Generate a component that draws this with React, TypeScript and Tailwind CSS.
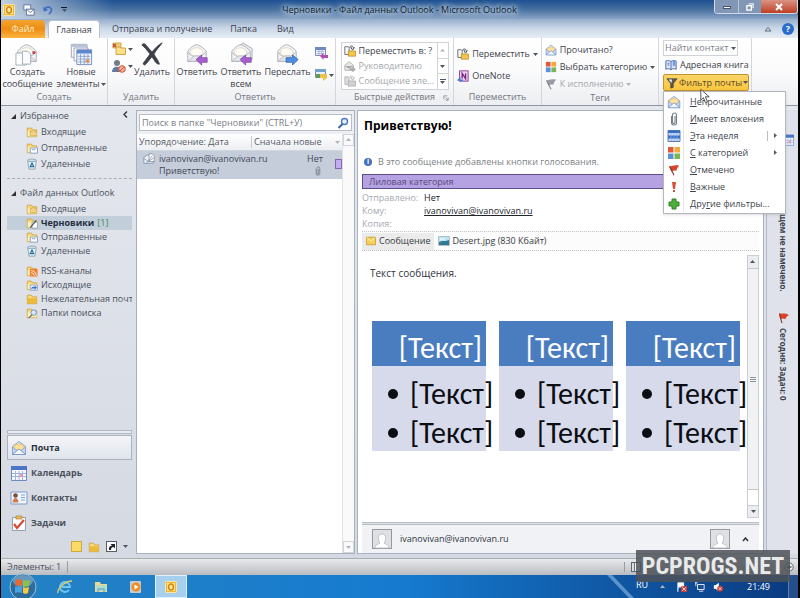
import type { ReactNode } from "react";

type IconProps = { className?: string };

function OutlookIcon({ className = "h-3 w-3" }: IconProps) {
  return (
    <svg viewBox="0 0 12 12" className={className} aria-hidden="true">
      <rect x="0.5" y="0.5" width="11" height="11" rx="1" fill="#f4b52a" stroke="#fbe6a6" />
      <rect x="2" y="2" width="8" height="8" fill="#fde9a8" />
      <ellipse cx="6" cy="6" rx="2.4" ry="3" fill="none" stroke="#d98407" strokeWidth="1.5" />
    </svg>
  );
}

function Envelope({ className = "h-4 w-4" }: IconProps) {
  return (
    <svg viewBox="0 0 16 16" className={className} aria-hidden="true">
      <path d="M1.5 6.5 8 1.5l6.5 5v8h-13z" fill="#dfeafb" stroke="#8aa3cc" />
      <path d="M3 7c0-4 10-4 10 0v3H3z" fill="#fbdf9a" stroke="#e3b75a" strokeWidth=".7" />
      <path d="M1.5 7 6 10.5 1.5 14.5zM14.5 7 10 10.5l4.5 4z" fill="#c3d6f3" stroke="#7e9bcb" strokeWidth=".7" />
      <path d="M1.5 14.5 8 9l6.5 5.5z" fill="#f4f8fe" stroke="#6f92c9" strokeWidth=".8" />
    </svg>
  );
}

function BigMail({ variant }: { variant: "new" | "reply" | "replyAll" | "forward" }) {
  return (
    <svg viewBox="0 0 26 26" className="h-6 w-6" aria-hidden="true">
      {variant === "replyAll" && <path d="M7 8 15 1l10 6v12H7z" fill="#eceef1" stroke="#a4a8b0" />}
      <path d="M3 10.5C3 9 9 3 12.5 3S23 9 23 10.5V21H3z" fill="#f3f4f5" stroke="#a9adb3" />
      <path d="M6 10c1-5 12-5 13 0l1 4-7.5 3L5 14z" fill="#fffdf3" stroke="#c9c7b8" strokeWidth=".7" />
      <path d="M3 21l7-6h6l7 6z" fill="#e2e5e9" stroke="#a9adb3" strokeWidth=".8" />
      <path d="M3 11l7 5M23 11l-7 5" stroke="#b6bac0" fill="none" />
      {variant === "new" && (
        <>
          <path d="M1 12h8l3 3v10H1z" fill="#fff" stroke="#a3abb8" />
          <path d="M9 10h5l3 3v11H8V10z" fill="#f8fafc" stroke="#9da6b5" />
          <path d="M19 10h3v3h-3z" fill="#c9424e" />
        </>
      )}
      {(variant === "reply" || variant === "replyAll") && (
        <path d="M12 19l6-5v3h6v5h-6v3z" fill="#a85fd0" stroke="#7a3ca3" strokeWidth=".8" />
      )}
      {variant === "forward" && (
        <path d="M25 19l-6-5v3h-7v5h7v3z" fill="#4e8de0" stroke="#2a60ab" strokeWidth=".8" />
      )}
    </svg>
  );
}

function NewItems() {
  return (
    <svg viewBox="0 0 26 26" className="h-6 w-6" aria-hidden="true">
      <path d="M2.5 2.5h17v14h-17z" fill="#f6f8fb" stroke="#9aa4b4" />
      <path d="M2.5 2.5h17v3h-17z" fill="#b7c3d6" />
      <path d="M5.5 6.5h15v14h-15z" fill="#fff" stroke="#93a0b5" />
      <path d="M8.5 8.5h16v16h-16z" fill="#f2f7ff" stroke="#7089b8" />
      <path d="M8.5 8.5h16v4h-16z" fill="#5f86cf" />
      <path d="M10 15.5h13M10 18.5h13M10 21.5h13M12.5 13v11M16.5 13v11M20.5 13v11" stroke="#88a2d2" />
      <path d="M18 19h4v3h-4z" fill="#e58f57" />
    </svg>
  );
}

function DeleteCross() {
  return (
    <svg viewBox="0 0 26 26" className="h-6 w-6" aria-hidden="true">
      <path d="M2 3c2-2 4-1 5 1l6 7c4-5 7-8 11-10-3 4-6 7-9 12 2 4 5 7 6 11-4 0-5-4-8-8-3 3-5 7-8 9-2-1-2-2 0-4l6-8-5-6z" fill="#3c3f45" stroke="#3c3f45" />
    </svg>
  );
}

function Folder({ className = "h-3 w-3", badge }: IconProps & { badge?: string }) {
  return (
    <svg viewBox="0 0 14 14" className={className} aria-hidden="true">
      <path d="M1.5 2.5h5l1 2h5v8h-11z" fill="#f9d978" stroke="#c99e3c" strokeWidth=".9" />
      <path d="M2 6h10.5v6H2z" fill={badge === "junk" ? "#efb93a" : "#fdeeb5"} />
      {badge === "inbox" && <path d="M5 6h7v5H5l0-5 3.5 3L12 6" fill="#fce28d" stroke="#d0983a" strokeWidth=".8" />}
      {badge === "sent" && <path d="M5 7h8.5v6H5zM7 9h4" fill="#fff" stroke="#6d8dc0" strokeWidth=".9" />}
      {badge === "draft" && (
        <>
          <path d="M7 6h6.5v7H7z" fill="#fff" stroke="#8391a8" strokeWidth=".8" />
          <path d="M5 12.5 12 4" stroke="#4d5664" strokeWidth="1.5" />
        </>
      )}
      {badge === "rss" && (
        <>
          <rect x="4.5" y="4.5" width="9" height="9" rx="1" fill="#ef7f31" />
          <path d="M6 9a3.5 3.5 0 0 1 3.5 3.5M6 6.5a6 6 0 0 1 6 6M6.5 12h.5" stroke="#fff" fill="none" />
        </>
      )}
      {badge === "out" && (
        <>
          <path d="M5 7h8.5v6H5z" fill="#eef4ff" stroke="#6d8dc0" strokeWidth=".8" />
          <path d="M6 12c0-3 2-3 4-3V7.5l3 2.5-3 2.5V11c-2 0-3 0-4 1z" fill="#3f74ca" />
        </>
      )}
      {badge === "search" && (
        <>
          <path d="M3 13l4-4" stroke="#74757c" strokeWidth="1.5" />
          <circle cx="9" cy="6.5" r="3.2" fill="#d4e8ff" stroke="#6285b8" />
        </>
      )}
    </svg>
  );
}

function TrashIcon() {
  return (
    <svg viewBox="0 0 14 14" className="h-3 w-3" aria-hidden="true">
      <path d="M2 3h10l-1.5 10h-7z" fill="#e7f2f8" stroke="#7896a8" strokeWidth=".9" />
      <ellipse cx="7" cy="2.8" rx="5" ry="1.6" fill="#cbdde8" stroke="#7896a8" strokeWidth=".8" />
      <path d="M5 10l2-4 2 4z" fill="none" stroke="#28729b" strokeWidth="1.4" />
    </svg>
  );
}

function MoveIcon({ gray }: { gray?: boolean }) {
  return (
    <svg viewBox="0 0 14 14" className="h-3 w-3 shrink-0" aria-hidden="true">
      <path d="M1 2h4l1 1v8H1z" fill={gray ? "#ddd" : "#fff"} stroke={gray ? "#b5b5b5" : "#555b66"} />
      <path d="M6 3c2-3 5-2 5 1l1-1-2 3-2-3h1" fill="none" stroke={gray ? "#aaa" : "#333943"} />
      <path d="M5 7h8.5v6H5z" fill={gray ? "#d0d0d0" : "#f5c84d"} stroke={gray ? "#aaa" : "#b7872a"} strokeWidth=".9" />
    </svg>
  );
}

function PersonMail() {
  return (
    <svg viewBox="0 0 14 14" className="h-3 w-3 shrink-0" aria-hidden="true">
      <path d="M1 6l5-4 5 4v6H1z" fill="#e7e7e7" stroke="#b0b0b0" />
      <path d="M1 7l5 3 5-3M7 10h3V8l3.5 3-3.5 3v-2H7z" fill="#aaa" stroke="#aaa" strokeWidth=".5" />
    </svg>
  );
}

function SmallReply({ calendar }: { calendar?: boolean }) {
  return (
    <svg viewBox="0 0 14 14" className="h-3.5 w-3.5" aria-hidden="true">
      <path d="M1.5 1.5h10v8h-10z" fill="#eaf0fb" stroke="#7d8cad" />
      <path d="M1 1h11v3H1z" fill={calendar ? "#7189c0" : "#74a2cf"} />
      {calendar ? (
        <path d="M3 5.5h7M3 7.5h7M5 4v5M8 4v5" stroke="#9aaad0" strokeWidth=".7" />
      ) : (
        <path d="M2 6h5v4H2z" fill="#5d9c61" />
      )}
      <path d={calendar ? "M6 10l3.5-3v2H14v3H9.5v2z" : "M6 6h7v4l-4 3V10H6z"} fill={calendar ? "#b24fae" : "#edc34b"} />
    </svg>
  );
}

function JunkIcon() {
  return (
    <svg viewBox="0 0 14 14" className="h-3.5 w-3.5" aria-hidden="true">
      <circle cx="5" cy="4" r="3" fill="#727b8a" />
      <path d="M0 13c0-7 9-7 10 0z" fill="#66799f" />
      <circle cx="10" cy="10" r="3.3" fill="#f2b19b" stroke="#d55432" />
      <path d="M8 12l4-4" stroke="#d55432" />
    </svg>
  );
}

function CleanIcon() {
  return (
    <svg viewBox="0 0 14 14" className="h-3.5 w-3.5" aria-hidden="true">
      <path d="M1 1h8v5H1z" fill="#f4cf70" stroke="#c4973b" strokeWidth=".8" />
      <path d="M4 5h4l1 1h4.5v6.5H4z" fill="#fbe089" stroke="#cc9d37" strokeWidth=".9" />
      <path d="M1 2l3 3M4 2 1 5" stroke="#c4473b" strokeWidth="1.2" />
    </svg>
  );
}

function Categories({ className = "h-3 w-3" }: IconProps) {
  return (
    <svg viewBox="0 0 14 14" className={`${className} shrink-0`} aria-hidden="true">
      <path d="M1 1h5.5v5.5H1z" fill="#e0593b" />
      <path d="M7.5 1H13v5.5H7.5z" fill="#f3a73c" />
      <path d="M1 7.5h5.5V13H1z" fill="#5b8fdb" />
      <path d="M7.5 7.5H13V13H7.5z" fill="#79b552" />
    </svg>
  );
}

function Flag({ className = "h-3 w-3", gray }: IconProps & { gray?: boolean }) {
  return (
    <svg viewBox="0 0 14 14" className={`${className} shrink-0`} aria-hidden="true">
      <path d="M1 2c3 2 5-2 12 0-2 2-3 4-3 6-3-1-4 0-6 1z" fill={gray ? "#999da3" : "#d8432b"} />
      <path d="M2 3l5 10" stroke={gray ? "#85898f" : "#8b3b2b"} strokeWidth="1.3" />
    </svg>
  );
}

function Book() {
  return (
    <svg viewBox="0 0 14 14" className="h-3 w-3 shrink-0" aria-hidden="true">
      <path d="M1 2.5c2-1 4-1 6 .5 2-1.5 4-1.5 6-.5V12c-2-1-4-1-6 .5C5 11 3 11 1 12z" fill="#dfeafc" stroke="#35599e" />
      <path d="M7 3v9M3 5h2M3 7h2" stroke="#35599e" />
      <path d="M9 2v7l1.5-1.5L12 9V2z" fill="#6f9adf" />
    </svg>
  );
}

function Funnel() {
  return (
    <svg viewBox="0 0 14 14" className="h-3 w-3 shrink-0" aria-hidden="true">
      <path d="M1 2h12L8.5 7.5V12l-3 1V7.5z" fill="#5d5a50" stroke="#393732" strokeWidth=".7" />
      <path d="M3 3h4L6.5 7z" fill="#eee" />
    </svg>
  );
}

function Clip({ className = "h-3.5 w-3.5" }: IconProps) {
  return (
    <svg viewBox="0 0 14 14" className={className} aria-hidden="true">
      <path d="M4.5 4v6.5a2.5 2.5 0 0 0 5 0V3a2 2 0 0 0-4 0v7c0 2 2.5 2 2.5 0V4" fill="none" stroke="#777e87" strokeWidth="1.1" />
    </svg>
  );
}

function CalendarIcon({ className = "h-4 w-4" }: IconProps) {
  return (
    <svg viewBox="0 0 16 16" className={className} aria-hidden="true">
      <path d="M.5 1.5h15v14H.5z" fill="#f6f9ff" stroke="#6f8ac0" />
      <path d="M0 1h16v4H0z" fill="#4a76c5" />
      <path d="M1 8.5h14M1 11.5h14M4.5 6v9M8 6v9M11.5 6v9" stroke="#9db2dc" />
      <path d="M9 9h3v3H9z" fill="#e19ba1" />
    </svg>
  );
}

function WeekIcon() {
  return (
    <svg viewBox="0 0 14 14" className="h-3.5 w-3.5" aria-hidden="true">
      <path d="M1 1.5h12v11H1z" fill="#c6dbf8" stroke="#5c7db9" />
      <path d="M1 1.5h12V4H1zM1 6.5h12v3H1z" fill="#3b6fc6" />
      <path d="M4 4v8M7 4v8M10 4v8" stroke="#8eaee2" strokeWidth=".7" />
    </svg>
  );
}

function ContactsIcon() {
  return (
    <svg viewBox="0 0 18 16" className="h-4 w-4.5 shrink-0" aria-hidden="true">
      <path d="M1 2h16v12H1z" fill="#f1f6fd" stroke="#7d9ac7" />
      <circle cx="5.5" cy="5.5" r="2.3" fill="#7c4d37" />
      <path d="M2.5 12.5c0-6 6-6 6 0z" fill="#d07c52" />
      <path d="M11 5h4M11 7.5h4M11 10h4" stroke="#7aa3df" strokeWidth="1.2" />
    </svg>
  );
}

function TasksIcon() {
  return (
    <svg viewBox="0 0 16 16" className="h-4 w-4" aria-hidden="true">
      <path d="M1.5 2.5h13v13h-13z" fill="#fdfdfe" stroke="#98a0ad" />
      <path d="M5 1h6v3H5z" fill="#edb956" stroke="#b38233" strokeWidth=".7" />
      <path d="M3 9l3 4 7-8" fill="none" stroke="#d74b35" strokeWidth="2.2" />
    </svg>
  );
}

function OpenMessage() {
  return (
    <svg viewBox="0 0 14 14" className="h-3 w-3 shrink-0" aria-hidden="true">
      <path d="M1 5l5-3 6 3v7H1z" fill="#eff3f9" stroke="#71809a" strokeWidth=".8" />
      <path d="M7 1h4l2 2v7H7z" fill="#fff" stroke="#6c7888" strokeWidth=".8" />
      <path d="M1 6l5 4 6-4M4 12l7-9" fill="none" stroke="#8796ad" />
    </svg>
  );
}

function Avatar() {
  return (
    <svg viewBox="0 0 20 20" className="h-5 w-5" aria-hidden="true">
      <rect x="0.5" y="0.5" width="19" height="19" fill="#dfe0e4" stroke="#96989e" />
      <path d="M3 19c0-4 3-3 5-5-2-2-3-9 2-9s4 7 2 9c2 2 5 1 5 5z" fill="#fff" stroke="#b3b5ba" strokeWidth=".8" />
    </svg>
  );
}

function Caret({ light }: { light?: boolean }) {
  return (
    <svg viewBox="0 0 5 3" className="h-[3px] w-[5px] shrink-0" aria-hidden="true">
      <path d="M0 0h5L2.5 3z" fill={light ? "#b0b4b9" : "#4d545e"} />
    </svg>
  );
}

function Group({ title, className, children, launcher }: { title: string; className: string; children: ReactNode; launcher?: boolean }) {
  return (
    <section className={`relative flex shrink-0 flex-col border-r border-[#d3d6db] ${className}`}>
      <div className="flex flex-1 justify-center pt-1">{children}</div>
      <h2 className="h-3.5 text-center leading-3 text-[#73777e]">{title}</h2>
      {launcher && (
        <svg viewBox="0 0 7 7" className="absolute right-1 bottom-1 h-1.5 w-1.5" aria-hidden="true">
          <path d="M1 5V1h4M3 3l3 3M6 3v3H3" fill="none" stroke="#8b9099" />
        </svg>
      )}
    </section>
  );
}

function BigButton({ icon, lines, caret }: { icon: ReactNode; lines: string[]; caret?: boolean }) {
  return (
    <button type="button" className="flex flex-col items-center whitespace-nowrap">
      {icon}
      {lines.map((line, i) => (
        <span key={line} className="flex items-center gap-px leading-3">
          {line}
          {caret && i === lines.length - 1 ? <Caret /> : null}
        </span>
      ))}
    </button>
  );
}

function SmallButton({ icon, label, caret, disabled }: { icon: ReactNode; label: string; caret?: boolean; disabled?: boolean }) {
  return (
    <button type="button" disabled={disabled} className="flex h-4 items-center gap-[3px] whitespace-nowrap disabled:text-[#a4a7ab]">
      {icon}
      <span>{label}</span>
      {caret && <Caret light={disabled} />}
    </button>
  );
}

const favorites = [
  { name: "Входящие", icon: <Folder badge="inbox" /> },
  { name: "Отправленные", icon: <Folder badge="sent" /> },
  { name: "Удаленные", icon: <TrashIcon /> },
];

const folders = [
  { name: "Входящие", icon: <Folder badge="inbox" /> },
  { name: "Черновики", icon: <Folder badge="draft" />, count: 1 },
  { name: "Отправленные", icon: <Folder badge="sent" /> },
  { name: "Удаленные", icon: <TrashIcon /> },
];

const moreFolders = [
  { name: "RSS-каналы", icon: <Folder badge="rss" /> },
  { name: "Исходящие", icon: <Folder badge="out" /> },
  { name: "Нежелательная почта", icon: <Folder badge="junk" /> },
  { name: "Папки поиска", icon: <Folder badge="search" /> },
];

const modules = [
  { name: "Почта", icon: <Envelope />, active: true },
  { name: "Календарь", icon: <CalendarIcon />, active: false },
  { name: "Контакты", icon: <ContactsIcon />, active: false },
  { name: "Задачи", icon: <TasksIcon />, active: false },
];

const filters = [
  { before: "", key: "Н", after: "епрочитанные", icon: <Envelope className="h-3.5 w-3.5" /> },
  { before: "", key: "И", after: "меет вложения", icon: <Clip /> },
  { before: "", key: "Э", after: "та неделя", icon: <WeekIcon />, sub: true, split: true },
  { before: "", key: "С", after: " категорией", icon: <Categories className="h-3.5 w-3.5" />, sub: true },
  { before: "", key: "О", after: "тмечено", icon: <Flag /> },
  {
    before: "",
    key: "В",
    after: "ажные",
    icon: (
      <svg viewBox="0 0 12 12" className="h-3 w-3" aria-hidden="true">
        <path d="M4 1h4L7 8H5zM5 9h2v2H5z" fill="#d8502f" />
      </svg>
    ),
  },
  {
    before: "Дру",
    key: "г",
    after: "ие фильтры...",
    icon: (
      <svg viewBox="0 0 12 12" className="h-3 w-3" aria-hidden="true">
        <path d="M4 1h4v3h3v4H8v3H4V8H1V4h3z" fill="#4eae3e" stroke="#2c8126" />
      </svg>
    ),
  },
];

function TitleBar() {
  return (
    <header className="relative flex h-[19px] shrink-0 items-center bg-linear-to-b from-[#1d4f92] via-[#47719f] to-[#8ba4c6] px-0.5">
      <div className="absolute inset-y-0 left-0 w-28 bg-linear-to-r from-[#c3d1e2] to-transparent" />
      <div className="relative flex items-center gap-2">
        <OutlookIcon />
        <button type="button" aria-label="Отправить и получить">
          <svg viewBox="0 0 14 14" className="h-3 w-3" aria-hidden="true">
            <path d="M1 1h8v6H1z" fill="#f9fbff" stroke="#5b6d8b" />
            <path d="M4 6h9v7H4z" fill="#fff" stroke="#51678c" />
            <path d="M4 6l4.5 4L13 6" fill="none" stroke="#51678c" />
          </svg>
        </button>
        <button type="button" aria-label="Отменить">
          <svg viewBox="0 0 12 12" className="h-2.5 w-2.5" aria-hidden="true">
            <path d="M2 5c2-4 9-3 8 2-.5 2-1.5 3-3 4" fill="none" stroke="#3f6ec7" strokeWidth="2" />
            <path d="M0 2l1 6 5-2z" fill="#3f6ec7" />
          </svg>
        </button>
        <button type="button" aria-label="Настройка панели" className="flex flex-col items-center gap-px">
          <span className="h-px w-1.5 bg-slate-900" />
          <Caret />
        </button>
      </div>
      <h1 className="absolute inset-x-0 text-center text-[#0c1a30] [text-shadow:0_0_4px_#dfe9f5,0_0_6px_#dfe9f5,0_0_9px_#c6d6ea]">
        Черновики - Файл данных Outlook - Microsoft Outlook
      </h1>
      <div className="absolute top-0 right-0 flex h-3.5 overflow-hidden rounded-b border border-t-0 border-[#d2dae6]">
        <button type="button" aria-label="Свернуть" className="flex w-6 items-end justify-center border-r border-[#b9c5d6] bg-[#8296b5] pb-1">
          <span className="h-[3px] w-2 border border-slate-600 bg-white" />
        </button>
        <button type="button" aria-label="Восстановить" className="flex w-[22px] items-center justify-center bg-[#8296b5]">
          <svg viewBox="0 0 9 9" className="h-2 w-2" aria-hidden="true">
            <path d="M3 1h5v5" fill="none" stroke="#e9eef5" strokeWidth="1.5" />
            <rect x="1" y="3" width="5" height="5" fill="none" stroke="#fff" strokeWidth="1.5" />
          </svg>
        </button>
        <button type="button" aria-label="Закрыть" className="flex w-9 items-center justify-center bg-linear-to-b from-[#d99383] to-[#bd3b22]">
          <svg viewBox="0 0 8 8" className="h-2 w-2" aria-hidden="true">
            <path d="M1 1l6 6M7 1 1 7" stroke="#fff" strokeWidth="2" />
          </svg>
        </button>
      </div>
    </header>
  );
}

function RibbonTabs() {
  return (
    <nav className="flex h-[19px] shrink-0 items-end bg-linear-to-b from-[#96adcc] via-[#cbd8e8] to-[#e6ecf4] text-[#3b4350]">
      <button type="button" className="h-[18px] w-11 rounded-t-sm bg-linear-to-b from-[#f3a42f] via-[#ee8c12] to-[#fdb53c] text-[#fff3cf]">
        Файл
      </button>
      <button type="button" className="ml-[3px] h-[18px] w-[52px] rounded-t-sm border border-b-0 border-[#b8c3d1] bg-white">
        Главная
      </button>
      <button type="button" className="ml-3 h-[18px]">Отправка и получение</button>
      <button type="button" className="ml-[18px] h-[18px]">Папка</button>
      <button type="button" className="ml-5 h-[18px]">Вид</button>
      <div className="ml-auto flex h-[18px] items-center gap-2.5 pr-1">
        <svg viewBox="0 0 8 6" className="h-1.5 w-2" aria-hidden="true">
          <path d="M1 5l3-3.5L7 5z" fill="none" stroke="#626b78" />
        </svg>
        <button type="button" className="h-3 w-3 rounded-full bg-[#2c6ccb] text-center font-bold leading-3 text-white">?</button>
      </div>
    </nav>
  );
}

function FilterMenu() {
  return (
    <div role="menu" className="absolute top-full left-0 z-20 w-[123px] border border-[#b4b8be] bg-white py-px shadow-sm">
      {filters.map((item) => (
        <button key={item.after} type="button" role="menuitem" className="flex h-[17px] w-full items-center whitespace-nowrap text-[#3e444d]">
          <span className="flex h-full w-5 items-center justify-center border-r border-[#e3e5e8]">{item.icon}</span>
          <span className="ml-1.5">
            {item.before}
            <u>{item.key}</u>
            {item.after}
          </span>
          {item.sub && (
            <span className={`ml-auto mr-2 flex h-2.5 items-center pl-1.5 ${item.split ? "border-l border-[#b9bcc1]" : ""}`}>
              <svg viewBox="0 0 3 5" className="h-[5px] w-[3px]" aria-hidden="true">
                <path d="M0 0l3 2.5L0 5z" fill="#555b66" />
              </svg>
            </span>
          )}
        </button>
      ))}
      <svg viewBox="0 0 12 18" className="absolute -top-1 left-9 h-4 w-2.5" aria-hidden="true">
        <path d="M1 1v13l3-3 2.5 6 2.5-1-2.5-6h4.5z" fill="#fff" stroke="#333" />
      </svg>
    </div>
  );
}

function Ribbon() {
  return (
    <div className="flex h-[68px] shrink-0 border-b border-[#9096a0] bg-linear-to-b from-white via-[#fbfbfc] to-[#eceef1] text-[#3e444d]">
      <Group title="Создать" className="w-[107px]">
        <div className="flex gap-1">
          <BigButton icon={<BigMail variant="new" />} lines={["Создать", "сообщение"]} />
          <BigButton icon={<NewItems />} lines={["Новые", "элементы"]} caret />
        </div>
      </Group>
      <Group title="Удалить" className="w-[67px]">
        <div className="flex gap-px">
          <div className="flex flex-col gap-[3px]">
            <button type="button" aria-label="Очистить" className="flex items-center gap-0.5"><CleanIcon /><Caret /></button>
            <button type="button" aria-label="Нежелательная почта" className="flex items-center gap-0.5"><JunkIcon /><Caret /></button>
          </div>
          <BigButton icon={<DeleteCross />} lines={["Удалить"]} />
        </div>
      </Group>
      <Group title="Ответить" className="w-[161px]">
        <div className="flex gap-[3px]">
          <BigButton icon={<BigMail variant="reply" />} lines={["Ответить"]} />
          <BigButton icon={<BigMail variant="replyAll" />} lines={["Ответить", "всем"]} />
          <BigButton icon={<BigMail variant="forward" />} lines={["Переслать"]} />
          <div className="flex flex-col gap-2 pt-1">
            <button type="button" aria-label="Собрание"><SmallReply calendar /></button>
            <button type="button" aria-label="Дополнительно" className="flex items-center gap-px"><SmallReply /><Caret /></button>
          </div>
        </div>
      </Group>
      <Group title="Быстрые действия" className="w-[118px]" launcher>
        <div className="flex h-12 w-[108px] border border-[#d0d4d9] bg-white">
          <div className="flex flex-1 flex-col overflow-hidden pl-0.5">
            <SmallButton icon={<MoveIcon />} label="Переместить в: ?" />
            <SmallButton icon={<PersonMail />} label="Руководителю" disabled />
            <SmallButton icon={<MoveIcon gray />} label="Сообщение эле..." disabled />
          </div>
          <div className="flex w-[11px] flex-col border-l border-[#d0d4d9]">
            <button type="button" aria-label="Вверх" className="flex flex-1 rotate-180 items-center justify-center"><Caret light /></button>
            <button type="button" aria-label="Вниз" className="flex flex-1 items-center justify-center border-y border-[#d0d4d9]"><Caret /></button>
            <button type="button" aria-label="Еще" className="flex flex-1 flex-col items-center justify-center gap-px"><span className="h-px w-1.5 bg-slate-600" /><Caret /></button>
          </div>
        </div>
      </Group>
      <Group title="Переместить" className="w-[88px]">
        <div className="flex flex-col gap-1.5 pt-1">
          <SmallButton icon={<MoveIcon />} label="Переместить" caret />
          <SmallButton
            icon={
              <svg viewBox="0 0 14 14" className="h-3 w-3 shrink-0" aria-hidden="true">
                <rect x="3" y="1" width="10" height="12" fill="#ead0ee" stroke="#87338f" />
                <path d="M6 10V4l4 6V4" fill="none" stroke="#7a2184" strokeWidth="1.5" />
                <path d="M0 12l4-4v3h3v2H3z" fill="#477ed3" />
              </svg>
            }
            label="OneNote"
          />
        </div>
      </Group>
      <Group title="Теги" className="w-[117px]">
        <div className="flex flex-col gap-px">
          <SmallButton icon={<Envelope className="h-3 w-3 shrink-0" />} label="Прочитано?" />
          <SmallButton icon={<Categories />} label="Выбрать категорию" caret />
          <SmallButton icon={<Flag gray />} label="К исполнению" caret disabled />
        </div>
      </Group>
      <section className="w-[93px] shrink-0 border-r border-[#d3d6db] pt-0.5 pl-1">
        <button type="button" className="flex h-4 w-[75px] items-center justify-between border border-[#cfd3d8] bg-white px-px whitespace-nowrap text-[#7c8087]">
          Найти контакт
          <Caret />
        </button>
        <div className="py-px pl-0.5">
          <SmallButton icon={<Book />} label="Адресная книга" />
        </div>
        <div className="relative">
          <button type="button" aria-haspopup="menu" aria-expanded="true" className="flex h-[17px] w-[86px] items-center gap-px rounded-xs border border-[#c2942e] bg-linear-to-b from-[#fbd468] to-[#f8c63f] pl-0.5 whitespace-nowrap text-[#5e4a1a]">
            <Funnel />
            Фильтр почты
            <Caret />
          </button>
          <FilterMenu />
        </div>
      </section>
    </div>
  );
}

function FolderRow({ folder, tall }: { folder: { name: string; icon: ReactNode; count?: number }; tall?: boolean }) {
  return (
    <li>
      <button
        type="button"
        className={`flex w-full items-center gap-[3px] overflow-hidden pl-[19px] whitespace-nowrap ${tall ? "h-4" : "h-3.5"} ${
          folder.count ? "bg-[#c3cedb] font-bold text-[#25303f]" : ""
        }`}
      >
        <span className="shrink-0">{folder.icon}</span>
        {folder.name}
        {folder.count && <span className="font-normal text-[#3e8a58]">[{folder.count}]</span>}
      </button>
    </li>
  );
}

function FolderHeader({ children }: { children: ReactNode }) {
  return (
    <h2 className="flex h-4 items-center gap-1 pl-1">
      <svg viewBox="0 0 5 5" className="h-[5px] w-[5px]" aria-hidden="true">
        <path d="M5 0v5H0z" fill="#333" />
      </svg>
      {children}
    </h2>
  );
}

function Sidebar() {
  return (
    <aside className="flex w-[135px] shrink-0 flex-col pr-1 pl-1.5 text-[#4a515c]">
      <div className="flex items-center justify-between pt-0.5 pr-1">
        <FolderHeader>Избранное</FolderHeader>
        <button type="button" aria-label="Свернуть область" className="mb-1">
          <svg viewBox="0 0 5 7" className="h-[7px] w-[5px]" aria-hidden="true">
            <path d="M4 .5 1 3.5l3 3" fill="none" stroke="#30353d" strokeWidth="1.3" />
          </svg>
        </button>
      </div>
      <ul>
        {favorites.map((folder) => (
          <FolderRow key={folder.name} folder={folder} tall />
        ))}
      </ul>
      <hr className="my-1.5 border-dashed border-[#a7b0be]" />
      <FolderHeader>Файл данных Outlook</FolderHeader>
      <ul className="mt-px">
        {folders.map((folder) => (
          <FolderRow key={folder.name} folder={folder} />
        ))}
      </ul>
      <ul className="mt-1.5">
        {moreFolders.map((folder) => (
          <FolderRow key={folder.name} folder={folder} />
        ))}
      </ul>
      <div className="mt-auto mb-px h-1 border border-[#b2b8c3] bg-[#e9ecf1]" />
      <nav className="flex flex-col">
        {modules.map((module) => (
          <button
            key={module.name}
            type="button"
            className={`flex h-[25px] items-center gap-1 border px-[3px] font-bold ${
              module.active ? "border-[#abb3c0] bg-linear-to-b from-[#f4f5f8] to-[#dfe4ec] text-[#262d38]" : "border-transparent"
            }`}
          >
            <span className="flex w-4 justify-center">{module.icon}</span>
            {module.name}
          </button>
        ))}
      </nav>
      <div className="flex h-[23px] items-center justify-end gap-1.5 pr-1">
        <button type="button" aria-label="Заметки" className="h-[11px] w-[11px] border border-[#d0a93c] bg-[#f8dc67]" />
        <button type="button" aria-label="Список папок"><Folder badge="junk" /></button>
        <button type="button" aria-label="Ярлыки">
          <svg viewBox="0 0 11 11" className="h-[11px] w-[11px]" aria-hidden="true">
            <rect x=".5" y=".5" width="10" height="10" fill="#fff" stroke="#555d6a" />
            <path d="M3 9c-.5-3 1-4 3-4.5L4.5 3H9v4.5L7.5 6C6 6 5 7 5 9z" fill="#20252d" />
          </svg>
        </button>
        <Caret />
      </div>
    </aside>
  );
}

function MessageList() {
  return (
    <section className="my-1 flex w-[219px] shrink-0 flex-col border border-[#a9b1be] bg-white">
      <div className="bg-[#edeff3] px-0.5 py-[3px]">
        <div className="flex h-[17px] items-center border border-[#b7bdc7] bg-white px-0.5">
          <input
            type="search"
            aria-label="Поиск"
            placeholder={'Поиск в папке "Черновики" (CTRL+У)'}
            className="h-3.5 min-w-0 flex-1 outline-none placeholder:text-[#777d87]"
          />
          <svg viewBox="0 0 12 12" className="h-3 w-3" aria-hidden="true">
            <circle cx="7.5" cy="4.5" r="3" fill="#e4f1ff" stroke="#4a78b9" strokeWidth="1.4" />
            <path d="M5.5 7 1.5 11" stroke="#35609f" strokeWidth="1.8" />
          </svg>
        </div>
      </div>
      <div className="flex min-h-0 flex-1">
        <div className="flex min-w-0 flex-1 flex-col">
          <div className="flex h-[17px] items-center border-b border-[#d2d6dd] bg-linear-to-b from-white to-[#eceef2] text-[#555c67]">
            <button type="button" className="h-3 w-[115px] border-r border-[#c5cad2] pl-0.5 text-left leading-3">Упорядочение: Дата</button>
            <button type="button" className="flex flex-1 items-center justify-between px-0.5">
              Сначала новые
              <Caret light />
            </button>
          </div>
          <article className="flex h-7 bg-[#c5ccda] pt-0.5 pl-1.5 text-[#414955]">
            <OpenMessage />
            <div className="ml-1 leading-3">
              <p>ivanovivan@ivanovivan.ru</p>
              <p>Приветствую!</p>
            </div>
            <div className="ml-auto flex flex-col items-end leading-3">
              <span>Нет</span>
              <Clip className="mt-px h-2.5 w-2.5" />
            </div>
            <span className="mt-1.5 ml-3 h-2.5 w-[7px] border border-[#8163b7] bg-[#c0aeea]" />
          </article>
        </div>
        <div className="flex w-3 flex-col justify-between border-l border-[#e0e2e6] bg-[#fafafb]">
          <button type="button" aria-label="Прокрутить вверх" className="flex h-3 rotate-180 items-center justify-center border border-[#d1d4da]"><Caret light /></button>
          <button type="button" aria-label="Прокрутить вниз" className="flex h-3 items-center justify-center border border-[#d1d4da]"><Caret light /></button>
        </div>
      </div>
    </section>
  );
}

function TextCard() {
  return (
    <div className="w-[114px] shrink-0 whitespace-nowrap bg-[#d6daeb] font-['Carlito','Lato','Open_Sans',sans-serif] text-[30px] leading-[39px] text-[#0b0d12]">
      <h3 className="flex h-[45px] items-end justify-end bg-[#4a7dbf] pr-1 leading-9 text-white">[Текст]</h3>
      <ul className="h-[85px] pt-2 pl-4">
        {[1, 2].map((n) => (
          <li key={n} className="flex items-center gap-3">
            <span className="h-2.5 w-2.5 shrink-0 rounded-full bg-[#0b0d12]" />
            [Текст]
          </li>
        ))}
      </ul>
    </div>
  );
}

function ReadingPane() {
  return (
    <section className="my-1 ml-0.5 flex min-w-0 flex-1 flex-col border border-[#a9b1be] bg-white px-1">
      <h2 className="mt-[7px] px-0.5 text-[12px] font-bold leading-4 text-black">Приветствую!</h2>
      <p className="mt-[21px] flex h-3.5 items-center gap-1.5 px-0.5 text-[#7c7f85]">
        <span className="h-2 w-2 rounded-full bg-[#4770ba] text-center text-[7px] font-bold leading-2 text-white">i</span>
        В это сообщение добавлены кнопки голосования.
      </p>
      <div className="mt-[5px] -mr-1 h-[15px] border border-r-0 border-[#5c4e8a] bg-[#b5a2e3] pl-1.5 leading-[13px] text-[#574a7d]">Лиловая категория</div>
      <dl className="mt-0.5 grid grid-cols-[62px_1fr] leading-[13px] text-[#a6aab2]">
        <dt>Отправлено:</dt>
        <dd className="text-[#22262c]">Нет</dd>
        <dt>Кому:</dt>
        <dd><a href="#to" className="text-[#22262c] underline">ivanovivan@ivanovivan.ru</a></dd>
        <dt>Копия:</dt>
        <dd />
      </dl>
      <div className="mt-px flex h-5 items-center border-y border-dotted border-[#c2c4c9] bg-[#fdfcfc] text-[#363b43]">
        <button type="button" className="flex h-[17px] items-center gap-[3px] bg-[#ebebeb] px-1">
          <svg viewBox="0 0 12 12" className="h-2.5 w-2.5" aria-hidden="true">
            <path d="M.5 1.5h11v9H.5z" fill="#f6d05d" stroke="#c8962d" />
            <path d="M1 2l5 4 5-4" fill="none" stroke="#fff4c6" />
          </svg>
          Сообщение
        </button>
        <button type="button" className="ml-1 flex items-center gap-0.5">
          <svg viewBox="0 0 12 12" className="h-3 w-3" aria-hidden="true">
            <path d="M.5 1.5h11v9H.5z" fill="#b8e3f2" stroke="#b4bec7" />
            <path d="M1 7c4-2 5 0 10-2v5H1z" fill="#327995" />
            <path d="M2 4h5" stroke="#fff" />
          </svg>
          Desert.jpg (830 Кбайт)
        </button>
      </div>
      <div className="mt-1 flex min-h-0 flex-1">
        <div className="min-w-0 flex-1 pt-2.5 pl-2">
          <p className="text-[10px] leading-4 text-[#30343b]">Текст сообщения.</p>
          <div className="mt-10 flex gap-[13px] pl-0.5">
            <TextCard />
            <TextCard />
            <TextCard />
          </div>
        </div>
        <div className="flex w-3 shrink-0 flex-col border border-[#c9ccd2] bg-[#ecedf0]">
          <button type="button" aria-label="Прокрутить вверх" className="flex h-3 rotate-180 items-center justify-center"><Caret /></button>
          <div className="flex h-[222px] flex-col items-center justify-center gap-px border-y border-[#c3c6cc] bg-[#f1f2f4]">
            <span className="h-px w-1.5 bg-[#8e929a]" />
            <span className="h-px w-1.5 bg-[#8e929a]" />
            <span className="h-px w-1.5 bg-[#8e929a]" />
          </div>
          <div className="flex-1 bg-white" />
          <button type="button" aria-label="Прокрутить вниз" className="flex h-3 items-center justify-center border-t border-[#c9ccd2]"><Caret /></button>
        </div>
      </div>
      <div className="mt-1 h-[3px] border-y border-[#b9bdc5] bg-[#dde0e5]" />
      <footer className="flex h-7 items-center bg-[#f1f2f6] px-2.5 text-[#2f343c]">
        <Avatar />
        <span className="ml-2">ivanovivan@ivanovivan.ru</span>
        <span className="ml-auto"><Avatar /></span>
        <button type="button" aria-label="Развернуть" className="ml-3">
          <svg viewBox="0 0 7 5" className="h-[5px] w-[7px]" aria-hidden="true">
            <path d="M1 4l2.5-3L6 4" fill="none" stroke="#333" strokeWidth="1.5" />
          </svg>
        </button>
      </footer>
    </section>
  );
}

function TodoBar() {
  return (
    <aside className="my-1 ml-0.5 flex w-8 shrink-0 flex-col items-center border-l border-[#b5bbc6] bg-[#dfe2ea] text-[8px] font-bold text-[#3c424c]">
      <span className="mt-6 ml-2.5"><CalendarIcon className="h-3 w-3" /></span>
      <span className="mt-[68px] leading-3 [writing-mode:vertical-rl]">щем не намечено.</span>
      <span className="mt-5 mb-1 rotate-12"><Flag /></span>
      <span className="leading-3 [writing-mode:vertical-rl]">Сегодня: Задач: 0</span>
    </aside>
  );
}

function StatusBar() {
  return (
    <div className="flex h-[17px] shrink-0 items-center justify-between border-t border-[#a9adb5] bg-linear-to-b from-[#e9eaec] to-[#b9bcc1] pr-1 text-[#4b515a]">
      <span className="border-r border-[#9a9ea5] px-1.5">Элементы: 1</span>
      <div className="flex w-[170px] items-center justify-between border-l border-[#9a9ea5] pl-1.5">
        <svg viewBox="0 0 9 9" className="h-2.5 w-2.5" aria-hidden="true">
          <path d="M.5.5h8v8h-8zM3 1v7" fill="#f2f3f5" stroke="#5f656e" />
        </svg>
        <svg viewBox="0 0 10 10" className="h-2.5 w-2.5" aria-hidden="true">
          <circle cx="5" cy="5" r="4.2" fill="#f4f4f5" stroke="#5f656e" />
          <path d="M5 2.5v5M2.5 5h5" stroke="#4b515a" strokeWidth="1.3" />
        </svg>
      </div>
    </div>
  );
}

function Taskbar() {
  return (
    <footer className="relative flex h-[23px] shrink-0 items-center bg-linear-to-r from-[#2481c3] via-[#167bd0] to-[#0b3a80] text-white">
      <svg viewBox="0 0 30 23" className="absolute right-40 h-full w-8" aria-hidden="true">
        <path d="M0 0h5l22 23h-5z" fill="#8fbbe6" opacity=".6" />
      </svg>
      <button type="button" aria-label="Пуск" className="relative ml-2">
        <svg viewBox="0 0 28 28" className="h-7 w-7" aria-hidden="true">
          <circle cx="14" cy="14" r="13" fill="#2c6c9d" stroke="#93bfdc" />
          <ellipse cx="14" cy="8" rx="10" ry="6" fill="#8cb6d0" opacity=".6" />
          <path d="M7 7c2-1 4-1 6 0v6c-2-1-5-1-7 0z" fill="#e8682f" />
          <path d="M14 7c2 1 5 1 7 0l-1 6c-2 1-4 1-6 0z" fill="#8cc34b" />
          <path d="M6 14c2-1 5-1 7 0v6c-2-1-5-1-7 0z" fill="#4aa2e2" />
          <path d="M14 14c2 1 4 1 6 0l-1 6c-1 1-4 1-5 0z" fill="#fbc93e" />
        </svg>
      </button>
      <button type="button" aria-label="Internet Explorer" className="ml-5">
        <svg viewBox="0 0 16 16" className="h-4 w-4" aria-hidden="true">
          <path d="M12 11a5 5 0 1 1 1-3H5" fill="none" stroke="#6fc7f4" strokeWidth="2" />
          <path d="M1 14C0 10 8 2 15 2" fill="none" stroke="#e4cd69" strokeWidth="1.3" />
        </svg>
      </button>
      <button type="button" aria-label="Проводник" className="ml-5">
        <svg viewBox="0 0 16 16" className="h-4 w-4" aria-hidden="true">
          <path d="M2 3h5l1 2h6v8H2z" fill="#ead98c" />
          <path d="M3 6h11v6H3z" fill="#b9dcc1" />
          <path d="M5 13v-3h6v3" fill="none" stroke="#6cb1dd" strokeWidth="1.5" />
        </svg>
      </button>
      <button type="button" aria-label="Проигрыватель" className="ml-5">
        <svg viewBox="0 0 14 14" className="h-3.5 w-3.5" aria-hidden="true">
          <rect x="1" y="1" width="11" height="12" rx="1" fill="#c7cbd0" />
          <circle cx="7" cy="7" r="4.5" fill="#f18b25" />
          <path d="M5.5 4.5v5L9.5 7z" fill="#fff" />
        </svg>
      </button>
      <button type="button" aria-label="Outlook" className="ml-3 flex h-full w-8 items-center justify-center border border-[#e1f0fb] bg-[#a7d0ee]">
        <OutlookIcon />
      </button>
      <div className="ml-auto flex items-center gap-3 pr-[18px]">
        <span className="mb-1">RU</span>
        <span className="rotate-180"><Caret light /></span>
        <span className="flex items-center gap-2">
          <svg viewBox="0 0 12 12" className="h-2.5 w-2.5" aria-hidden="true">
            <path d="M1 12V1h7v5H2" fill="#fff" stroke="#fff" />
            <path d="M5 5h7v7H5z" fill="#d23b33" />
            <path d="M6.5 6.5l4 4M10.5 6.5l-4 4" stroke="#fff" />
          </svg>
          <svg viewBox="0 0 12 12" className="h-2.5 w-2.5" aria-hidden="true">
            <path d="M3 3h8v6H3zM5 11h5M1 0v5M0 1h3" fill="#1d4d8f" stroke="#fff" />
          </svg>
          <svg viewBox="0 0 12 12" className="h-2.5 w-2.5" aria-hidden="true">
            <path d="M1 4h2l4-3v10L3 8H1z" fill="#fff" />
            <circle cx="8.5" cy="8" r="3.5" fill="#d23b33" />
            <path d="M7 6.5l3 3M10 6.5l-3 3" stroke="#fff" />
          </svg>
        </span>
        <time className="ml-3">21:49</time>
      </div>
      <span className="h-full w-2.5 border-l border-[#5c80b0] bg-[#244f8c]" />
    </footer>
  );
}

export default function App() {
  return (
    <main className="relative flex h-screen min-h-[598px] flex-col overflow-hidden border-r-2 border-l border-black bg-[#dfe2ea] font-['Open_Sans','Noto_Sans',sans-serif] text-[9px] leading-3">
      <TitleBar />
      <RibbonTabs />
      <Ribbon />
      <div className="flex min-h-0 flex-1 bg-linear-to-b from-[#e4e7ed] to-[#d5d9e2]">
        <Sidebar />
        <MessageList />
        <ReadingPane />
        <TodoBar />
      </div>
      <StatusBar />
      <Taskbar />
      <div className="absolute right-2 bottom-4 z-30 flex h-8 w-[154px] items-center justify-center bg-[#4d5258]/85 font-['Roboto_Condensed','Roboto',sans-serif] text-2xl font-bold text-[#e9eaeb]">
        PCPROGS.NET
      </div>
    </main>
  );
}
